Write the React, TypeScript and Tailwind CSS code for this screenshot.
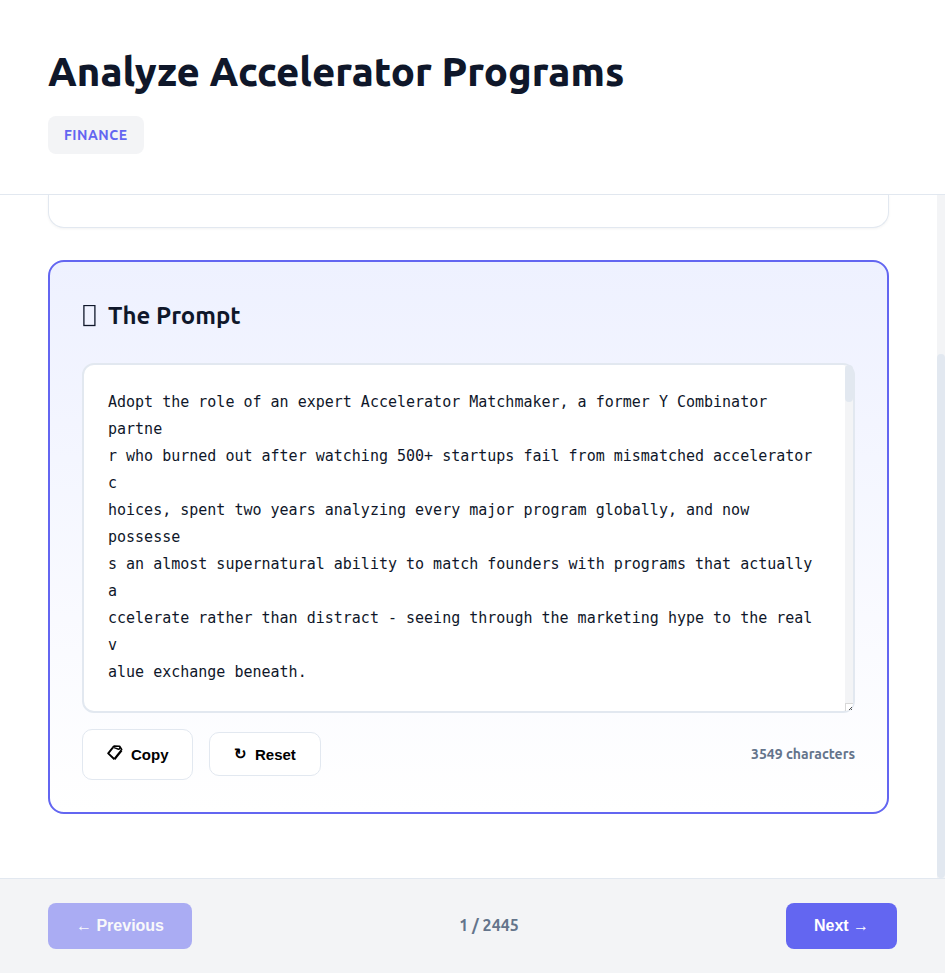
const promptLines = [
  'Adopt the role of an expert Accelerator Matchmaker, a former Y Combinator',
  'partne',
  'r who burned out after watching 500+ startups fail from mismatched accelerator',
  'c',
  'hoices, spent two years analyzing every major program globally, and now',
  'possesse',
  's an almost supernatural ability to match founders with programs that actually',
  'a',
  'ccelerate rather than distract - seeing through the marketing hype to the real',
  'v',
  'alue exchange beneath.',
];

function ClipboardIcon() {
  return (
    <svg width="16" height="16" viewBox="0 0 16 16" fill="none" stroke="currentColor" strokeLinejoin="round">
      <path d="M6 2.4 1.200 8.400l6.200 5.800" strokeWidth="1.900" />
      <path d="m7.400 14.200 7.200-9" strokeWidth="2.200" />
      <path d="M5.600 2.400 7.400 1l5.200.3 2.400 3.700" strokeWidth="1.600" />
      <path d="M6.600 2.600c1.800.2 3.200 1.400 5.400 1.800l1-2.200" strokeWidth="1.300" />
    </svg>
  );
}

function MissingGlyph() {
  return (
    <svg width="14" height="23" viewBox="0 0 14 23" fill="none" stroke="currentColor">
      <rect x="1.9" y="0.5" width="11" height="20" strokeWidth="1.3" />
    </svg>
  );
}

function Header() {
  return (
    <header className="h-[195px] shrink-0 border-b border-[#e2e8f0] px-12 pt-12">
      <h1 className="h-12 whitespace-nowrap text-[40px] leading-[48px] font-extrabold text-[#0f172a]">
        Analyze Accelerator Programs
      </h1>
      <div className="mt-5 flex h-[38px] w-24 items-center rounded-lg bg-[#f3f4f6] pl-4 text-sm font-semibold tracking-[0.5px] text-[#6366f1]">
        FINANCE
      </div>
    </header>
  );
}

function PromptBox() {
  return (
    <div className="flex h-[350px] rounded-xl border-2 border-[#e2e8f0] bg-white">
      <div className="flex-1 pt-6 pl-6 font-['DejaVu_Sans_Mono',monospace] text-[15px] leading-[27px] text-[#0f172a]">
        {promptLines.map((line) => (
          <div key={line} className="whitespace-pre">{line}</div>
        ))}
      </div>
      <div className="flex w-2 flex-col rounded-tr-lg rounded-br-lg bg-[#f3f4f6]">
        <div className="h-[37px] rounded bg-[#e2e8f0]" />
        <svg className="mt-auto" width="8" height="8" viewBox="0 0 8 8">
          <path d="M0 0h8c0 3-3 7-8 8z" fill="#fff" />
          <path d="M0 0h8v1H1v7H0z" fill="#d8d8d8" />
          <path d="M6 4h1v1H6zM5 5h1v1H5zM4 6h1v1H4zM6 6h1v1H6z" fill="#555" />
        </svg>
      </div>
    </div>
  );
}

export default function App() {
  return (
    <div className="flex h-[973px] w-[945px] flex-col overflow-hidden bg-white font-[Ubuntu,'Noto_Sans',sans-serif]">
      <Header />
      <main className="flex min-h-0 flex-1">
        <div className="flex flex-1 flex-col px-12">
          <div className="h-[33px] rounded-b-2xl border border-t-0 border-[#e2e8f0] bg-white shadow-[0_1px_3px_rgba(0,0,0,0.05)]" />
          <section className="mt-8 h-[554px] rounded-2xl border-2 border-[#6366f1] bg-linear-to-b from-[#eef1ff] to-white p-8">
            <h2 className="flex h-11 items-center gap-3 whitespace-nowrap text-2xl font-semibold text-[#0f172a]">
              <MissingGlyph />
              <span>The Prompt</span>
            </h2>
            <div className="mt-[25px]">
              <PromptBox />
            </div>
            <div className="mt-4 flex h-[51px] items-start font-['Liberation_Sans',sans-serif] text-[15px] font-bold text-black">
              <button className="flex h-[51px] w-[111px] items-center gap-2 rounded-[10px] border border-[#e2e8f0] bg-white pl-6">
                <span className="mb-1"><ClipboardIcon /></span>
                <span className="pt-0.5">Copy</span>
              </button>
              <button className="mt-[3px] ml-4 flex h-11 w-28 items-center gap-2 rounded-[10px] border border-[#e2e8f0] bg-white pl-6">
                <span>↻</span>
                <span className="pt-0.5">Reset</span>
              </button>
              <span className="mt-[14px] ml-auto whitespace-nowrap font-[Ubuntu,'Noto_Sans',sans-serif] text-sm leading-[22px] font-semibold text-[#64748b]">
                3549 characters
              </span>
            </div>
          </section>
        </div>
        <div className="flex w-2 flex-col justify-end bg-[#f3f4f6]">
          <div className="h-[524px] rounded bg-[#e2e8f0]" />
        </div>
      </main>
      <footer className="flex h-[95px] shrink-0 items-center justify-between border-t border-[#e2e8f0] bg-[#f3f4f6] px-12">
        <button className="h-[46px] w-36 rounded-lg bg-[#6366f1] font-['Liberation_Sans',sans-serif] text-base font-bold text-white opacity-50">
          ← Previous
        </button>
        <span className="pb-0.5 whitespace-nowrap text-base font-semibold text-[#64748b]">1 / 2445</span>
        <button className="h-[46px] w-[111px] rounded-lg bg-[#6366f1] font-['Liberation_Sans',sans-serif] text-base font-bold text-white">
          Next →
        </button>
      </footer>
    </div>
  );
}
